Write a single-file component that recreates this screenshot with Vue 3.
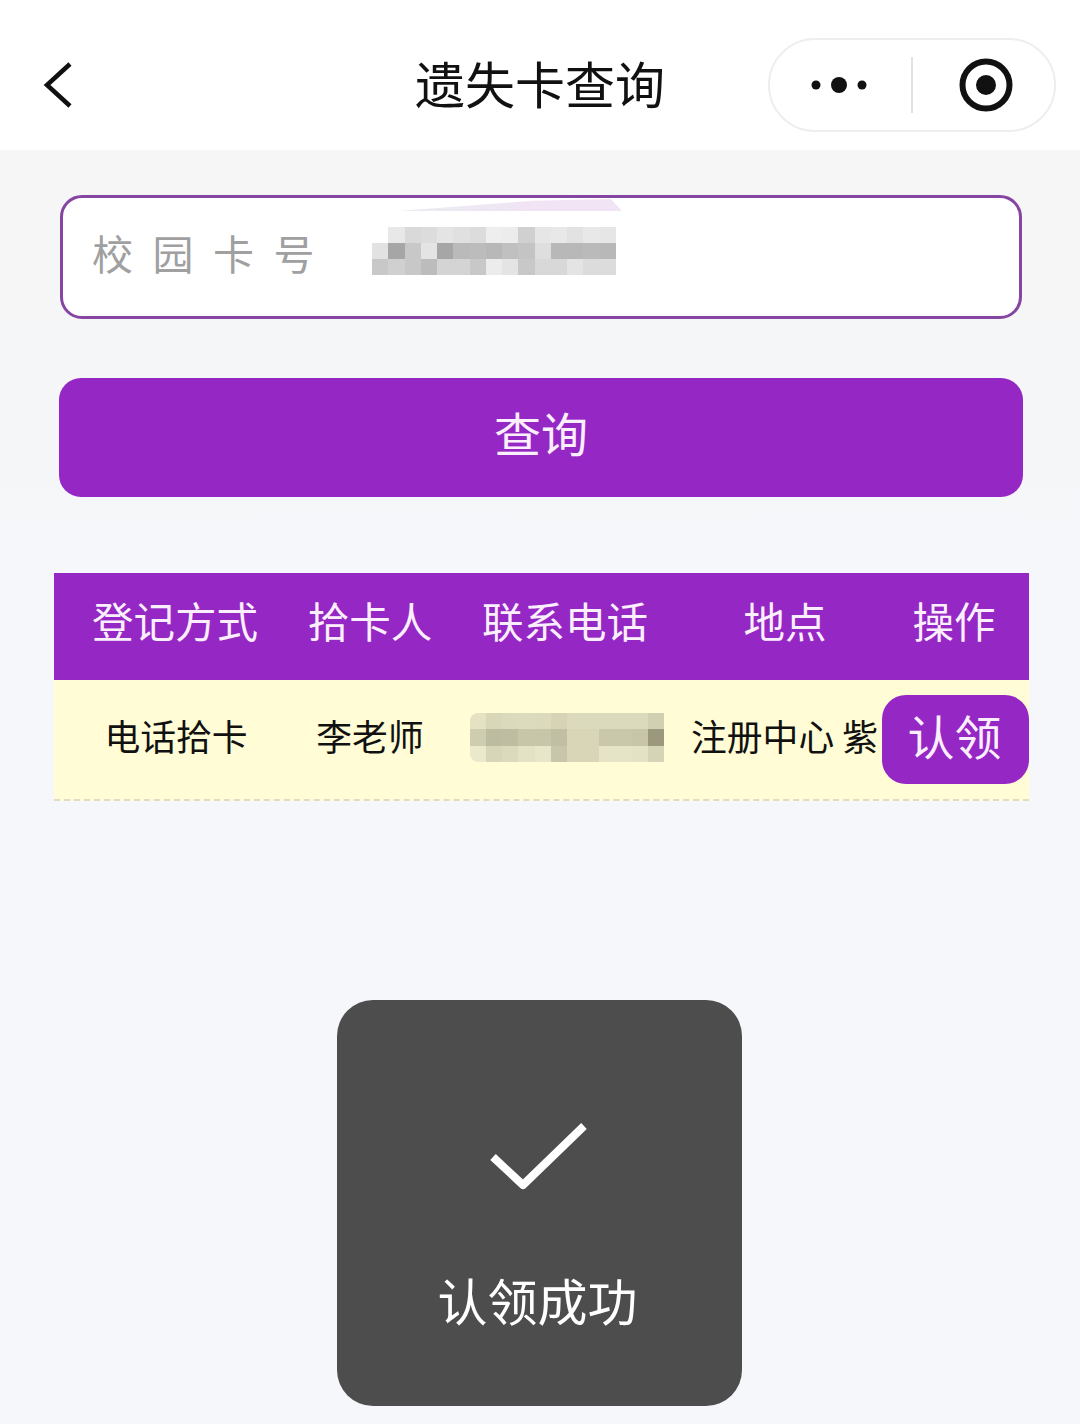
<script setup>
const columns = [
  { key: 'way', title: '登记方式' },
  { key: 'finder', title: '拾卡人' },
  { key: 'phone', title: '联系电话' },
  { key: 'place', title: '地点' },
  { key: 'action', title: '操作' }
]

// blurred-out values in the screenshot
const cardMosaic = [
  '#ffffff', '#e8e8e8', '#d9d9d9', '#dcdcdc', '#e4e4e4', '#e0e0e0', '#dcdcdc', '#eeeeee', '#ececec', '#d0d0d0', '#e6e6e6', '#e8e8e8', '#e2e2e2', '#e8e8e8', '#e6e6e6',
  '#e2e2e2', '#a6a6a6', '#c8c8c8', '#e4e4e4', '#a6a6a6', '#bababa', '#bcbcbc', '#b8b8b8', '#c0c0c0', '#c4c4c4', '#dedede', '#b8b8b8', '#b8b8b8', '#bababa', '#b8b8b8',
  '#c8c8c8', '#d0d0d0', '#c8c8c8', '#bcbcbc', '#d4d4d4', '#d4d4d4', '#c8c8c8', '#ececec', '#e4e4e4', '#c8c8c8', '#d8d8d8', '#d8d8d8', '#e4e4e4', '#dcdcdc', '#dcdcdc'
]

const phoneMosaic = [
  '#e4e2c2', '#d8d8b8', '#dcdabc', '#dddbbd', '#dcdabc', '#d6d4b4', '#dcdabc', '#dcdabc', '#dcdabc', '#dcdabc', '#dcdabc', '#d2d0b2',
  '#cfcdb0', '#bcbca0', '#bebda2', '#c8c6a8', '#c8c6a8', '#c0bfa4', '#d8d6b6', '#d8d6b6', '#cac8aa', '#cac8aa', '#c8c6a8', '#9b987e',
  '#ebe9cc', '#d8d6b8', '#dcdabc', '#e4e2c4', '#e8e6c8', '#c8c6aa', '#d8d6b6', '#d8d6b6', '#e6e4c6', '#e6e4c6', '#e4e2c4', '#d6d4b6'
]
</script>

<template>
  <div class="page">
    <header class="navbar">
      <svg class="back" width="40" height="60" viewBox="0 0 40 60">
        <path d="M32 9 L9 30 L32 51" fill="none" stroke="#111" stroke-width="4.5" />
      </svg>
      <h1>遗失卡查询</h1>
      <div class="capsule">
        <svg width="60" height="20" viewBox="0 0 60 20">
          <circle cx="7" cy="10" r="4.5" fill="#111" />
          <circle cx="30" cy="10" r="8" fill="#111" />
          <circle cx="53" cy="10" r="4.5" fill="#111" />
        </svg>
        <span class="divider"></span>
        <svg width="56" height="56" viewBox="0 0 56 56">
          <circle cx="28" cy="28" r="23.5" fill="none" stroke="#111" stroke-width="6" />
          <circle cx="28" cy="28" r="10" fill="#111" />
        </svg>
      </div>
    </header>

    <main class="content">
      <div class="search-box">
        <span class="label">校园卡号</span>
        <div class="mosaic card-no">
          <i v-for="(c, i) in cardMosaic" :key="i" :style="{ background: c }"></i>
        </div>
        <span class="smudge"></span>
      </div>

      <button class="search-btn">查询</button>

      <section class="table">
        <div class="thead">
          <div v-for="col in columns" :key="col.key">{{ col.title }}</div>
        </div>
        <div class="tbody">
          <div>电话拾卡</div>
          <div>李老师</div>
          <div class="phone-cell">
            <div class="mosaic phone">
              <i v-for="(c, i) in phoneMosaic" :key="i" :style="{ background: c }"></i>
            </div>
          </div>
          <div class="place">注册中心 紫</div>
          <button class="claim">认领</button>
        </div>
      </section>
    </main>

    <div class="toast">
      <svg width="100" height="70" viewBox="0 0 100 70">
        <path d="M5 34 L35 62 L96 3" fill="none" stroke="#fff" stroke-width="8" stroke-linejoin="round" />
      </svg>
      <p>认领成功</p>
    </div>
  </div>
</template>

<style>
html,
body {
  margin: 0;
  background: #f5f6fa;
}
</style>

<style scoped>
.page {
  position: relative;
  width: 1080px;
  height: 1424px;
  overflow: hidden;
  background: linear-gradient(#f6f6f6 200px, #f5f7fb 700px);
  font-family: "Noto Sans CJK SC", "Liberation Sans", sans-serif;
  color: #111;
}
.navbar {
  box-sizing: border-box;
  height: 150px;
  padding-top: 20px;
  display: grid;
  grid-template-columns: 1fr auto 1fr;
  align-items: center;
  background: #fff;
}
.back {
  margin-left: 38px;
}
h1 {
  margin: 0 0 7px;
  font-size: 50px;
  font-weight: 400;
  line-height: 60px;
}
.capsule {
  justify-self: end;
  box-sizing: border-box;
  width: 288px;
  height: 94px;
  margin-right: 24px;
  display: flex;
  align-items: center;
  padding-left: 39px;
  border: 2px solid #eeeeee;
  border-radius: 47px;
}
.divider {
  width: 2px;
  height: 56px;
  margin: 0 45px 0 42px;
  background: #e2e2e2;
}
.content {
  display: flex;
  flex-direction: column;
  align-items: flex-start;
}
.search-box {
  position: relative;
  box-sizing: border-box;
  width: 962px;
  height: 124px;
  margin: 45px 0 0 60px;
  padding: 0 0 10px 29px;
  display: flex;
  align-items: center;
  background: #fff;
  border: 3px solid #8546a3;
  border-radius: 22px;
}
.label {
  font-size: 41px;
  letter-spacing: 19.5px;
  color: #a0a0a0;
  line-height: 50px;
}
.mosaic {
  display: grid;
}
.card-no {
  width: 244px;
  height: 48px;
  margin: -2px 0 0 38px;
  grid-template-columns: repeat(15, 1fr);
  grid-template-rows: repeat(3, 1fr);
}
.smudge {
  position: absolute;
  left: 335px;
  top: 1px;
  width: 224px;
  height: 12px;
  background: linear-gradient(90deg, #e9edef, #f1e4f5 60%);
  clip-path: polygon(0 100%, 60% 15%, 95% 0, 100% 100%);
}
.search-btn {
  width: 964px;
  height: 119px;
  margin: 59px 0 0 59px;
  padding: 0 0 12px;
  border: none;
  border-radius: 22px;
  background: #9527c4;
  color: #fbeffd;
  font-family: inherit;
  font-size: 47px;
  line-height: 56px;
}
.table {
  width: 975px;
  margin: 76px 0 0 54px;
}
.thead,
.tbody {
  display: grid;
  grid-template-columns: 242px 148px 242px 198px 145px;
  align-items: center;
  text-align: center;
}
.thead {
  box-sizing: border-box;
  height: 107px;
  padding-bottom: 14px;
  background: #9527c4;
  color: #fbeffd;
  font-size: 41.5px;
}
.thead > div:last-child {
  padding-right: 5px;
}
.tbody {
  box-sizing: border-box;
  height: 121px;
  padding-bottom: 8px;
  background: #fffcd6;
  border-bottom: 2px dashed #dedcc4;
  font-size: 35.8px;
}
.tbody > div:first-child {
  padding: 0 2px 2px 4px;
}
.tbody > div:nth-child(2) {
  padding-bottom: 2px;
}
.phone-cell {
  display: flex;
  justify-content: center;
  padding: 4px 0 0 4px;
}
.phone {
  width: 194px;
  height: 49px;
  grid-template-columns: repeat(12, 1fr);
  grid-template-rows: repeat(3, 1fr);
  border-radius: 8px 0 0 8px;
  overflow: hidden;
}
.place {
  padding: 0 0 2px 5px;
  text-align: left;
  white-space: nowrap;
}
.claim {
  justify-self: end;
  width: 147px;
  height: 89px;
  margin-top: 7px;
  padding: 0 2px 8px 0;
  border: none;
  border-radius: 24px;
  background: #9527c4;
  color: #fbeffd;
  font-family: inherit;
  font-size: 47px;
  line-height: 56px;
}
.toast {
  position: absolute;
  left: 337px;
  top: 1000px;
  width: 405px;
  height: 406px;
  display: flex;
  flex-direction: column;
  align-items: center;
  padding-top: 123px;
  box-sizing: border-box;
  background: #4d4d4d;
  border-radius: 36px;
  color: #fff;
}
.toast svg {
  margin-right: 4px;
}
.toast p {
  margin: 76px 4px 0 0;
  font-size: 50px;
  line-height: 60px;
}
</style>
